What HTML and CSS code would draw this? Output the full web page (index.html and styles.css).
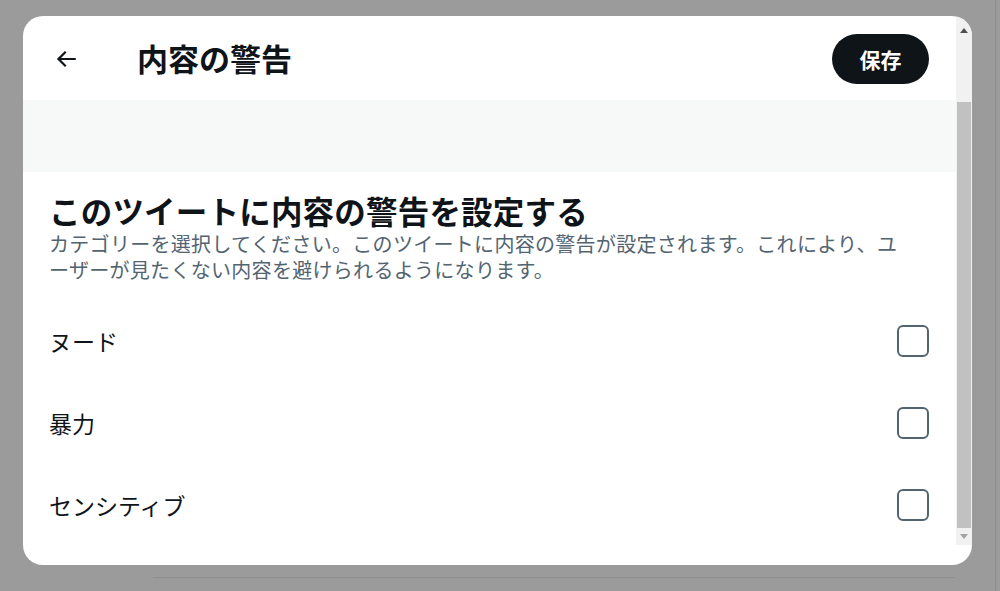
FILE: index.html
```html
<!DOCTYPE html>
<html lang="ja">
<head>
<meta charset="utf-8">
<title>内容の警告</title>
<link rel="stylesheet" href="styles.css">
</head>
<body>
<div class="page">
  <div class="modal">
    <div class="main">
      <header class="header">
        <button class="back" aria-label="戻る">
          <svg viewBox="0 0 24 24" width="26" height="26"><path d="M7.414 13l5.043 5.04-1.414 1.42L3.586 12l7.457-7.46 1.414 1.42L7.414 11H21v2H7.414z" fill="#0f1419"/></svg>
        </button>
        <h1 class="title">内容の警告</h1>
        <button class="save">保存</button>
      </header>
      <div class="band"></div>
      <section class="content">
        <h2 class="heading">このツイートに内容の警告を設定する</h2>
        <p class="desc">カテゴリーを選択してください。このツイートに内容の警告が設定されます。これにより、ユーザーが見たくない内容を避けられるようになります。</p>
        <ul class="options">
          <li class="option"><span>ヌード</span><span class="box"></span></li>
          <li class="option"><span>暴力</span><span class="box"></span></li>
          <li class="option"><span>センシティブ</span><span class="box"></span></li>
        </ul>
      </section>
    </div>
    <div class="scrollbar">
      <div class="arrow up"></div>
      <div class="track"><div class="thumb"></div></div>
      <div class="arrow down"></div>
    </div>
  </div>
  <div class="underline"></div>
</div>
</body>
</html>
```

FILE: styles.css
```css
* { box-sizing: border-box; }
html, body { margin: 0; padding: 0; }
body {
  width: 1000px;
  height: 591px;
  overflow: hidden;
  background: #9b9b9b;
  font-family: "Noto Sans CJK JP", "Noto Sans", sans-serif;
  color: #0f1419;
}
.page {
  width: 1000px;
  height: 591px;
  padding: 16px 28px 0 23px;
  box-shadow: inset -4px 0 0 #9b9b9b, inset -5px 0 0 #8c8c8c;
}
.modal {
  display: flex;
  height: 549px;
  background: #fff;
  border-radius: 20px;
  overflow: hidden;
}
.underline {
  height: 1px;
  margin: 12px 17px 0 130px;
  background: #8f8f8f;
}
.main {
  flex: 1;
  display: flex;
  flex-direction: column;
}
.header {
  height: 84px;
  display: flex;
  align-items: center;
  padding: 0 27px 0 28px;
}
.back {
  width: 30px;
  height: 30px;
  padding: 0;
  border: 0;
  background: none;
  display: flex;
  align-items: center;
  justify-content: center;
  margin-top: 2px;
}
.title {
  margin: 0 0 0 56px;
  font-size: 31px;
  font-weight: 700;
  line-height: 40px;
  flex: 1;
}
.save {
  width: 97px;
  height: 50px;
  border: 0;
  border-radius: 25px;
  background: #0f1419;
  color: #fff;
  font-family: inherit;
  font-size: 21px;
  font-weight: 700;
  margin-top: 2px;
}
.band {
  height: 72px;
  background: #f7f9f9;
}
.content {
  padding: 17px 27px 0 26px;
}
.heading {
  margin: 0;
  font-size: 31.5px;
  letter-spacing: 0.2px;
  font-weight: 700;
  line-height: 42px;
}
.desc {
  margin: 0;
  padding-right: 20px;
  color: #536471;
  font-size: 20px;
  line-height: 26px;
  letter-spacing: 0.3px;
  line-break: loose;
}
.options {
  list-style: none;
  margin: 17px 0 0 0;
  padding: 0;
}
.option {
  height: 82px;
  display: flex;
  align-items: center;
  justify-content: space-between;
  font-size: 23px;
  line-height: 30px;
}
.box {
  width: 32px;
  height: 32px;
  border: 2.5px solid #536471;
  border-radius: 6px;
}
.scrollbar {
  width: 16px;
  background: #f1f1f1;
  display: flex;
  flex-direction: column;
  padding-bottom: 20px;
  background-clip: content-box;
}
.arrow {
  height: 17px;
  display: flex;
  justify-content: center;
}
.arrow.up { padding-top: 6px; }
.arrow.up::before {
  content: "";
  border-left: 4px solid transparent;
  border-right: 4px solid transparent;
  border-bottom: 5px solid #505050;
}
.arrow.down { padding-top: 6px; }
.arrow.down::before {
  content: "";
  width: 0;
  height: 0;
  border-left: 4px solid transparent;
  border-right: 4px solid transparent;
  border-top: 5px solid #a3a3a3;
}
.track {
  flex: 1;
  padding: 69px 1px 0 1px;
  display: flex;
}
.thumb {
  flex: 1;
  background: #c1c1c1;
}
```
